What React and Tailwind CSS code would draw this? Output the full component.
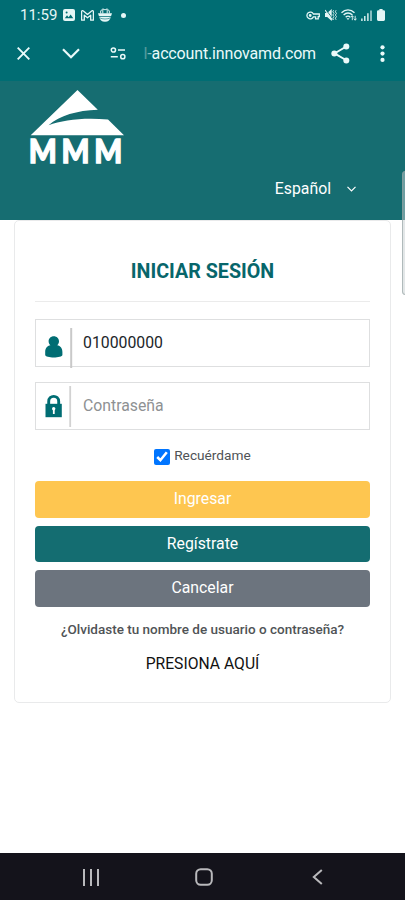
import React, { useState } from 'react';

const StatusBar = () => (
  <div className="flex h-[30px] items-center justify-between pl-[20px] pr-[20px] text-[#e4f6f6]">
    <div className="flex items-center">
      <span className="w-[43px] whitespace-nowrap text-[15px] leading-none">11:59</span>
      <svg className="h-3 w-3" viewBox="0 0 12 12">
        <rect width="12" height="12" rx="2" fill="currentColor" />
        <path d="M1.8 9.3 4 6.2l1.7 2L7.6 5.6l2.7 3.7z" fill="#006d73" />
        <circle cx="3.6" cy="3.6" r="1" fill="#006d73" />
      </svg>
      <svg className="ml-[6px] h-[11px] w-[13px]" viewBox="0 0 13 11" fill="none" stroke="currentColor" strokeWidth="1.3" strokeLinejoin="round">
        <path d="M.6 10.2V1.6C.6.7 1.7.4 2.4 1l4.1 3.4L10.6 1c.7-.6 1.8-.3 1.8.6v8.6H9.7V5.2L6.5 7.8 3.3 5.2v5z" />
      </svg>
      <svg className="ml-[4px] h-[14px] w-[14px]" viewBox="0 0 14 14">
        <path d="M0 5.2h14L13.1 8H.9zM1.2 8.7h11.6c-.4 3-2.6 5-5.8 5s-5.4-2-5.8-5z" fill="currentColor" />
        <path d="M2.7 5.5V2.7l1.3-.9M11.3 5.5V2.7L10 1.8M4.8 5.5V.8l1.3.8h1.8L9.2.8v4.7" fill="none" stroke="currentColor" strokeWidth="1" />
        <path d="M1.5 9.8c3 1.6 8 1.6 11 0" fill="none" stroke="#006d73" strokeWidth=".6" />
      </svg>
      <span className="ml-[9px] h-[5px] w-[5px] rounded-full bg-[#e4f6f6]" />
    </div>
    <div className="flex items-center">
      <svg className="h-[9px] w-[14px]" viewBox="0 0 14 9" fill="none" stroke="currentColor" strokeWidth="1.3">
        <path d="M7.4 3h5.9v2.7h-1.1v2.1H9.6V5.9H7.4A3.4 3.4 0 1 1 7.4 3z" />
        <circle cx="4.2" cy="4.5" r=".8" fill="currentColor" />
      </svg>
      <svg className="ml-[5px] h-[12px] w-[12px]" viewBox="0 0 12 12">
        <path d="M0 4h2.2L6.7 0v12L2.2 8H0z" fill="currentColor" />
        <path d="M1 .7l6.5 9" stroke="#006d73" strokeWidth=".9" />
        <path d="M0 1l7.3 10" stroke="currentColor" strokeWidth="1.1" />
        <path d="M8.6 1.2l-.8 1.6 1.2 1.6-1.2 1.6L9 7.6 7.8 9.2l.8 1.6M11.1 1.2l-.8 1.6 1.2 1.6-1.2 1.6 1.2 1.6-1.2 1.6.8 1.6" fill="none" stroke="currentColor" strokeWidth=".9" />
      </svg>
      <svg className="ml-[4px] h-[12px] w-[16px]" viewBox="0 0 16 12" fill="none" stroke="currentColor" strokeWidth="1.3">
        <path d="M.5 3.8c3.8-4 9.2-4 13 0M2.6 6c2.6-2.7 6.2-2.7 8.8 0M4.7 8.2c1.3-1.4 3.3-1.4 4.6 0" />
        <path d="M5.5 9.3h3L7 11z" fill="currentColor" stroke="none" />
        <path d="M11.3 11.2V6.8m-1.4 1.5 1.4-1.6 1.4 1.6M14.2 6.8v4.4m-1.4-1.6 1.4 1.6 1.4-1.6" strokeWidth=".9" />
      </svg>
      <svg className="ml-[4px] h-[11px] w-[11px]" viewBox="0 0 11 11" stroke="currentColor" strokeWidth="1.4">
        <path d="M.9 11V8.4M3.8 11V6M6.9 11V3.2" />
        <path d="M10 11V.4" opacity=".85" />
      </svg>
      <svg className="ml-[5px] h-[12px] w-[8px]" viewBox="0 0 8 12" fill="currentColor">
        <path d="M2.4 0h3.2v1.2h1A1.4 1.4 0 0 1 8 2.6v8A1.4 1.4 0 0 1 6.6 12H1.4A1.4 1.4 0 0 1 0 10.6v-8a1.4 1.4 0 0 1 1.4-1.4h1z" />
      </svg>
    </div>
  </div>
);

const BrowserBar = () => (
  <div className="flex h-[46px] items-center pl-[17px] text-[#eafafa]">
    <svg className="h-[13px] w-[13px]" viewBox="0 0 13 13" stroke="currentColor" strokeWidth="1.9">
      <path d="M.7.7l11.6 11.6M12.3.7.7 12.3" />
    </svg>
    <svg className="ml-[32px] h-[11px] w-[18px]" viewBox="0 0 18 11" fill="none" stroke="currentColor" strokeWidth="2.2">
      <path d="M1 1.2l8 8 8-8" />
    </svg>
    <svg className="ml-[30px] h-[13px] w-[16px]" viewBox="0 0 16 13" fill="none" stroke="currentColor" strokeWidth="1.5">
      <circle cx="3.4" cy="3" r="2.1" />
      <path d="M8 3h7M.8 9.7h7" />
      <circle cx="12.8" cy="9.7" r="2.1" />
    </svg>
    <div className="relative ml-[14px] w-[176px] pt-px">
      <div className="flex justify-end whitespace-nowrap text-[16px] leading-6 tracking-[-0.15px]">
        <span className="opacity-60">l-</span>
        <span>account.innovamd.com</span>
      </div>
      <div className="absolute inset-y-0 left-0 w-[10px] bg-linear-to-r from-[#006d73] to-transparent" />
    </div>
    <svg className="ml-[15px] h-[21px] w-[19px]" viewBox="0 0 19 21" fill="currentColor">
      <path d="M15.3 3.5 3.5 10.4l11.8 6.9" fill="none" stroke="currentColor" strokeWidth="1.9" />
      <circle cx="15.3" cy="3.4" r="3" />
      <circle cx="3.3" cy="10.4" r="3" />
      <circle cx="15.3" cy="17.4" r="3" />
    </svg>
    <svg className="ml-[30px] h-[17px] w-[5px]" viewBox="0 0 5 17" fill="currentColor">
      <circle cx="2.5" cy="2.3" r="2.1" />
      <circle cx="2.5" cy="8.6" r="2.1" />
      <circle cx="2.5" cy="14.9" r="2.1" />
    </svg>
  </div>
);

const Logo = () => (
  <svg className="h-[90px] w-[110px] overflow-visible" viewBox="0 0 110 90" fill="#fff">
    <path d="M48.5 1 68.8 20.8C48 21.5 31 26.5 19.5 36.3 34 30.8 55 28.3 79 30.5L95 46.2H1.7z" />
    <text
      x="1.3 36.9 72.5"
      y="74.1"
      transform="translate(-1.5 0) scale(.92 1)"
      fontFamily="Lato, sans-serif"
      fontWeight="900"
      fontSize="32"
      stroke="#fff"
      strokeWidth="1.3"
    >
      MMM
    </text>
  </svg>
);

const Field = ({ icon, ...props }) => (
  <div className="flex h-12 items-start border border-[#dedfe0] bg-white">
    {icon}
    <input
      className="h-[45px] min-w-0 flex-1 bg-transparent text-[15.8px] text-[#212529] outline-none placeholder:text-[#8e9193]"
      {...props}
    />
  </div>
);

const UserIcon = () => (
  <svg className="mr-[10px] h-[50px] w-[37px] shrink-0 overflow-visible" viewBox="0 0 37 50">
    <path d="M35.2 8v40" stroke="#c9c9c9" strokeWidth="2" />
    <path d="M17.8 16.3c3 0 5.2 2.3 5.2 5 0 1.7-.7 3-1.8 4 3.4.5 5.2 3.3 5.2 6.7v3c0 3.3-17.2 3.3-17.2 0v-3c0-3.4 1.8-6.2 5.2-6.7-1.1-1-1.8-2.3-1.8-4 0-2.7 2.2-5 5.2-5z" fill="#006d73" />
  </svg>
);

const LockIcon = () => (
  <svg className="mr-[10px] h-[46px] w-[37px] shrink-0" viewBox="0 0 37 46">
    <path d="M34.2 3v41" stroke="#d2d2d2" strokeWidth="1.8" />
    <path d="M12.7 22v-3.5c0-6.8 10-6.8 10 0V22" fill="none" stroke="#006d73" strokeWidth="2.9" />
    <path d="M9.5 20.8h16.3v13.4H9.5z" fill="#006d73" />
    <circle cx="17.7" cy="25.8" r="1.7" fill="#fff" />
    <path d="M16.9 26.5h1.8v4.5h-1.8z" fill="#fff" />
  </svg>
);

const buttons = [
  { label: 'Ingresar', color: 'bg-[#fec650]' },
  { label: 'Regístrate', color: 'bg-[#146d71]' },
  { label: 'Cancelar', color: 'bg-[#6c747e]' },
];

const App = () => {
  const [user, setUser] = useState('010000000');
  const [remember, setRemember] = useState(true);

  return (
    <div className="relative flex h-[900px] w-[405px] flex-col overflow-hidden bg-white font-['Roboto',sans-serif]">
      <div className="h-[81px] bg-[#006d73]">
        <StatusBar />
        <BrowserBar />
      </div>

      <header className="h-[139px] bg-[#166d71] px-[29px] pt-[8px]">
        <Logo />
        <button className="-mt-[2px] ml-auto mr-[20px] flex h-6 items-center gap-[16px] text-[15.8px] text-white">
          <span>Español</span>
          <svg className="h-[6px] w-[9px]" viewBox="0 0 9 6" fill="none" stroke="currentColor" strokeWidth="1.2">
            <path d="M.5.8l4 4 4-4" />
          </svg>
        </button>
      </header>

      <main className="flex-1 px-[14px]">
        <div className="h-[483px] rounded-[5px] border border-[#e9eaeb] px-5">
          <h1 className="pt-[37px] text-center text-[19.7px] font-bold leading-[28px] text-[#07666b]">INICIAR SESIÓN</h1>
          <hr className="mt-[15px] border-[#ebebeb]" />

          <form className="mt-[17px]" onSubmit={(e) => e.preventDefault()}>
            <Field icon={<UserIcon />} value={user} onChange={(e) => setUser(e.target.value)} />
            <div className="mt-[15px]">
              <Field icon={<LockIcon />} type="password" placeholder="Contraseña" />
            </div>

            <label className="mt-[15px] flex h-[20px] items-start justify-center gap-[4px] text-[13.7px] leading-5 text-[#505356]">
              <input
                type="checkbox"
                checked={remember}
                onChange={() => setRemember(!remember)}
                className="mt-[4px] h-4 w-4 accent-[#0075ff]"
              />
              Recuérdame
            </label>

            <div className="mt-[16px] flex flex-col gap-[8px]">
              {buttons.map((button) => (
                <button
                  key={button.label}
                  type="button"
                  className={`h-[36.5px] w-full rounded-[4px] text-[15.8px] text-white ${button.color}`}
                >
                  {button.label}
                </button>
              ))}
            </div>
          </form>

          <p className="mt-[12.5px] whitespace-nowrap text-center text-[13.5px] font-medium leading-5 text-[#505356]">
            ¿Olvidaste tu nombre de usuario o contraseña?
          </p>
          <a className="mt-[13px] block text-center text-[15.7px] leading-6 text-[#111]">PRESIONA AQUÍ</a>
        </div>
      </main>

      <nav className="flex h-[47px] items-center bg-[#14131b] pt-px pl-[83px] text-[#b9b9bc]">
        <svg className="h-[17px] w-[16px]" viewBox="0 0 16 17" stroke="currentColor" strokeWidth="2">
          <path d="M1 0v17M8 0v17M15 0v17" />
        </svg>
        <svg className="ml-[96px] h-[18px] w-[18px]" viewBox="0 0 18 18" fill="none" stroke="currentColor" strokeWidth="2">
          <rect x="1.2" y="1.2" width="15.6" height="15.6" rx="4.5" />
        </svg>
        <svg className="ml-[99px] h-[16px] w-[11px]" viewBox="0 0 11 16" fill="none" stroke="currentColor" strokeWidth="2">
          <path d="M9.8 1 1.8 8l8 7" />
        </svg>
      </nav>

      <div className="absolute top-[171px] -right-[4px] h-[124px] w-[7px] rounded-[4px] border border-[#8d9c9d]/60 bg-[#c8d0d1]/50" />
    </div>
  );
};

export default App;
